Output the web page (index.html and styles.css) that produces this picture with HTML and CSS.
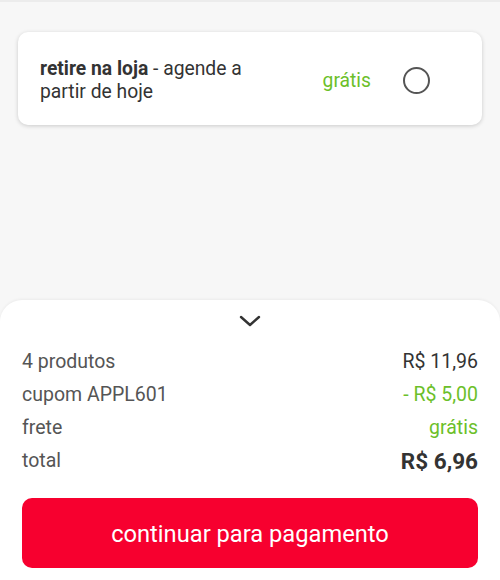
FILE: index.html
```html
<!DOCTYPE html>
<html lang="pt-BR">
<head>
  <meta charset="UTF-8" />
  <meta name="viewport" content="width=device-width, initial-scale=1.0">
  <title>Entrega</title>
  <link rel="stylesheet" href="styles.css">
</head>
<body>
  <div class="top-line"></div>

  <div class="option-card">
    <div class="option-text"><b>retire na loja</b> - agende a partir de hoje</div>
    <div class="option-price">grátis</div>
    <div class="radio"></div>
  </div>

  <div class="summary">
    <div class="toggle">
      <svg width="22" height="14" viewBox="0 0 22 14"><path d="M2 3 L11 11 L20 3" fill="none" stroke="#333" stroke-width="2.4" stroke-linecap="round" stroke-linejoin="round"/></svg>
    </div>
    <div class="row"><span class="label">4 produtos</span><span class="value">R$ 11,96</span></div>
    <div class="row"><span class="label">cupom APPL601</span><span class="value green">- R$ 5,00</span></div>
    <div class="row"><span class="label">frete</span><span class="value green">grátis</span></div>
    <div class="row"><span class="label">total</span><span class="value total">R$ 6,96</span></div>
    <button class="pay-btn">continuar para pagamento</button>
  </div>
</body>
</html>
```

FILE: styles.css
```css
html, body { height:100%; }
body { margin:0; font-family:Roboto, "Noto Sans", sans-serif; background:#f7f7f7; color:#333; display:flex; flex-direction:column; }
.top-line { height:2px; background:#ececec; }
.option-card { margin:30px 18px 0; height:93px; background:#fff; border-radius:10px; box-shadow:0 1px 4px rgba(0,0,0,.18); display:flex; align-items:center; padding:3px 22px 0; box-sizing:border-box; }
.option-text { width:240px; font-size:19.3px; line-height:23px; color:#333; }
.option-text b { font-weight:700; }
.option-price { margin-left:auto; color:#6cbf2a; font-size:19.3px; }
.radio { width:23px; height:23px; border:2.5px solid #555; border-radius:50%; margin:0 30px 0 32px; }
.summary { margin-top:auto; height:280px; background:#fff; border-radius:22px 22px 0 0; box-shadow:0 -1px 3px rgba(0,0,0,.05); padding:14px 22px 0; box-sizing:border-box; }
.toggle { height:14px; display:flex; justify-content:center; margin-bottom:17px; }
.row { height:33px; display:flex; justify-content:space-between; align-items:center; font-size:19.5px; }
.label { color:#555; }
.value { color:#333; }
.value.green { color:#6cbf2a; }
.value.total { font-weight:700; font-size:22.5px; }
.pay-btn { display:block; width:100%; height:70px; margin-top:21px; padding-top:3px; border:none; border-radius:10px; background:#f7002f; color:#fff; font-family:Roboto, sans-serif; font-size:23.7px; cursor:pointer; }
```
